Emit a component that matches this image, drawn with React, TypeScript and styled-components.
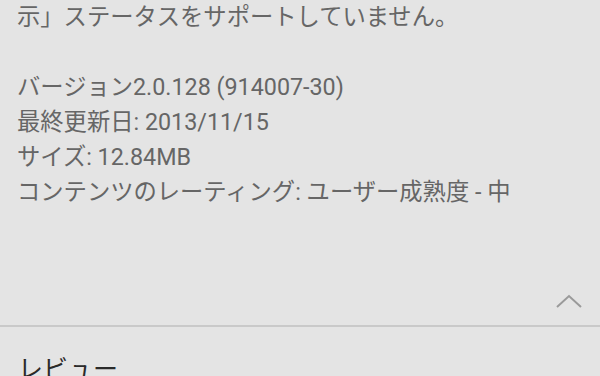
import React from "react";
import styled, { createGlobalStyle } from "styled-components";

const GlobalStyle = createGlobalStyle`
  html, body {
    margin: 0;
    padding: 0;
    background: #e4e4e4;
  }
  body {
    font-family: Roboto, "Noto Sans CJK JP", sans-serif;
  }
`;

type InfoLine = {
  text: string;
};

const details: InfoLine[] = [
  { text: "バージョン2.0.128 (914007-30)" },
  { text: "最終更新日: 2013/11/15" },
  { text: "サイズ: 12.84MB" },
  { text: "コンテンツのレーティング: ユーザー成熟度 - 中" },
];

const App: React.FC = () => {
  return (
    <Page>
      <GlobalStyle />
      <Details>
        <Paragraph>示」ステータスをサポートしていません。</Paragraph>
        <InfoList>
          {details.map((d) => (
            <InfoItem key={d.text}>{d.text}</InfoItem>
          ))}
        </InfoList>
      </Details>
      <CollapseRow>
        <Chevron viewBox="0 0 28 16" aria-label="collapse">
          <polyline points="2,14 14,3 26,14" />
        </Chevron>
      </CollapseRow>
      <Reviews>
        <SectionTitle>レビュー</SectionTitle>
      </Reviews>
    </Page>
  );
};

export default App;

const Page = styled.div`
  width: 600px;
  height: 376px;
  overflow: hidden;
  background: #e4e4e4;
`;

const Details = styled.section`
  padding: 0 17px;
  color: #666666;
  font-size: 23.3px;
  line-height: 35px;
`;

const Paragraph = styled.p`
  margin: 0 0 35px;
  white-space: nowrap;
`;

const InfoList = styled.div`
  display: flex;
  flex-direction: column;
`;

const InfoItem = styled.div`
  white-space: nowrap;
`;

const CollapseRow = styled.div`
  height: 117px;
  display: flex;
  justify-content: flex-end;
  align-items: flex-end;
  padding: 0 17px 16px;
  box-sizing: border-box;
  border-bottom: 2px solid #c9c9c9;
`;

const Chevron = styled.svg`
  width: 28px;
  height: 16px;
  fill: none;
  stroke: #9a9a9a;
  stroke-width: 2;
`;

const Reviews = styled.section`
  padding: 29px 18px 0;
`;

const SectionTitle = styled.h2`
  margin: 0;
  font-size: 25px;
  line-height: 28px;
  font-weight: 400;
  color: #2a2a2a;
`;
